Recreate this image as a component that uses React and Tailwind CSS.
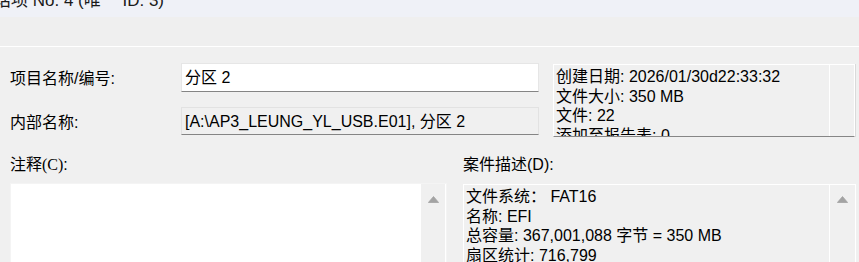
import React from 'react';

function ArrowUp() {
  return (
    <svg width="11" height="7" viewBox="0 0 11 7" className="block">
      <path d="M5.5 0.5 L10.6 6.5 L0.4 6.5 Z" fill="#a3a3a3" stroke="#a3a3a3" strokeWidth="0.8" strokeLinejoin="round" />
    </svg>
  );
}

const infoLines = [
  '创建日期: 2026/01/30d22:33:32',
  '文件大小: 350 MB',
  '文件: 22',
  '添加至报告表: 0',
];

const descLines = [
  '文件系统： FAT16',
  '名称: EFI',
  '总容量: 367,001,088 字节 = 350 MB',
  '扇区统计: 716,799',
  '扇区大小: 512 字节',
];

export default function App() {
  return (
    <div className="w-[859px] h-[262px] overflow-hidden bg-[#f0f0f0] text-black text-[16px] font-['Liberation_Sans','Noto_Sans_CJK_SC',sans-serif]">
      {/* Title strip, cut off at the top */}
      <div className="h-[17px] bg-[#eff1f7] overflow-hidden">
        <div className="-mt-[8px] -ml-[6px] text-[17px] leading-[17px] whitespace-nowrap text-[#1a1a1a]">
          话项 No. 4 (唯一 ID: 3)
        </div>
      </div>
      <div className="h-[29px] bg-[#efefef]" />
      <div className="h-px bg-white" />

      {/* Name fields + info box */}
      <div className="flex pt-[16px]">
        <div className="w-[539px] pl-[10px] flex flex-col gap-[15px]">
          <div className="flex items-center h-[29px]">
            <div className="w-[171px] pt-[2px] leading-[19px]">项目名称/编号:</div>
            <div className="flex-1 h-[29px] bg-white border border-[#e6e6e6] border-b-[#858585] pl-[3px] flex items-center leading-[19px]">
              分区 2
            </div>
          </div>
          <div className="flex items-center h-[28px]">
            <div className="w-[171px] pt-[2px] leading-[19px]">内部名称:</div>
            <div className="flex-1 h-[28px] bg-[#f0f0f0] border border-[#e2e2e2] border-b-[#858585] pl-[3px] flex items-center leading-[19px] whitespace-nowrap">
              [A:\AP3_LEUNG_YL_USB.E01], 分区 2
            </div>
          </div>
        </div>
        <div className="ml-[14px] mt-px w-[302px] h-[73px] flex bg-[#f0f0f0] border border-white border-b-[#868686] shadow-[1px_0_0_#dadada] overflow-hidden">
          <div className="flex-1 pl-[2px] pt-[2px] leading-[19.5px] whitespace-nowrap overflow-hidden">
            {infoLines.map((l) => (
              <div key={l}>{l}</div>
            ))}
          </div>
          <div className="w-[25px] border-l border-white" />
        </div>
      </div>

      {/* Comment + case description */}
      <div className="flex pt-[18px]">
        <div className="w-[447px] pl-[10px] flex flex-col">
          <div className="h-[28px] leading-[19px]">
            注释<span className="font-['Liberation_Serif',serif]">(C)</span>:
          </div>
          <div className="w-[437px] h-[100px] bg-white border border-[#f4f4f4] flex">
            <div className="flex-1" />
            <div className="w-[25px] bg-[#f0f0f0] border-r border-white flex justify-center pt-[12px]">
              <ArrowUp />
            </div>
          </div>
        </div>
        <div className="ml-[16px] w-[393px] flex flex-col">
          <div className="h-[28px] leading-[19px]">案件描述(D):</div>
          <div className="h-[100px] mt-px bg-[#f0f0f0] border border-white flex overflow-hidden">
            <div className="flex-1 pl-[2px] pt-[2px] leading-[19.5px] whitespace-nowrap overflow-hidden">
              {descLines.map((l) => (
                <div key={l}>{l}</div>
              ))}
            </div>
            <div className="w-[26px] border-l border-white flex justify-center pt-[11px]">
              <ArrowUp />
            </div>
          </div>
        </div>
      </div>
    </div>
  );
}
